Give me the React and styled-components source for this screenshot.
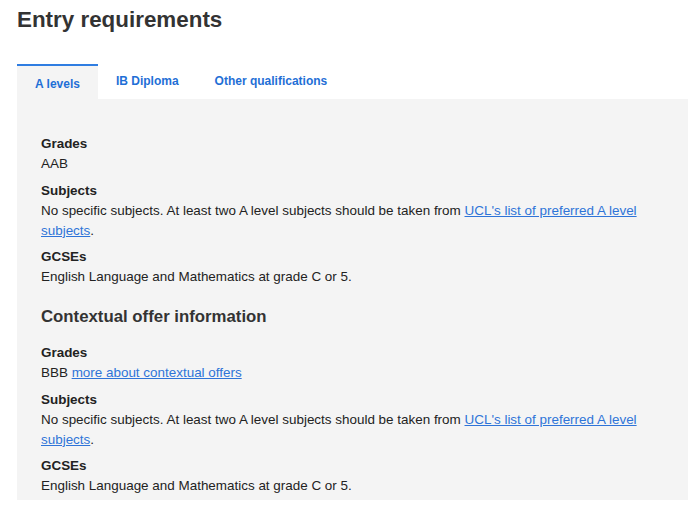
import React from 'react';
import styled, { createGlobalStyle } from 'styled-components';

const GlobalStyle = createGlobalStyle`
  body {
    margin: 0;
    background: #ffffff;
    font-family: 'Liberation Sans', Arial, sans-serif;
    color: #222222;
  }
`;

const Page = styled.div`
  padding: 4px 12px 0 17px;
`;

const Title = styled.h1`
  margin: 0;
  font-size: 22.4px;
  line-height: 32px;
  font-weight: bold;
  color: #333333;
`;

const TabList = styled.div`
  display: flex;
  margin-top: 28px;
`;

const Tab = styled.div`
  height: 35px;
  box-sizing: border-box;
  padding: ${(p) => (p.active ? '8px 18px 0' : '5px 18px 0')};
  border-top: 2px solid ${(p) => (p.active ? '#2f7de1' : 'transparent')};
  background: ${(p) => (p.active ? '#f4f4f4' : 'transparent')};
  color: #1f6fd6;
  font-size: 12px;
  font-weight: bold;
  line-height: 20px;
`;

const Panel = styled.div`
  background: #f4f4f4;
  padding: 35px 24px 0;
`;

const Block = styled.div`
  margin-bottom: 6.5px;
  font-size: 13.45px;
  line-height: 20px;

  &:last-child {
    margin-bottom: 0;
    padding-bottom: 4px;
  }
`;

const Label = styled.div`
  font-weight: bold;
  color: #222222;
`;

const Value = styled.div`
  color: #222222;
`;

const Link = styled.a`
  color: #2f74d8;
  text-decoration: underline;
`;

const SectionHeading = styled.h2`
  margin: 18px 0 14px;
  font-size: 16.8px;
  line-height: 24px;
  font-weight: bold;
  color: #333333;
`;

function Requirement({ label, children }) {
  return (
    <Block>
      <Label>{label}</Label>
      <Value>{children}</Value>
    </Block>
  );
}

const subjectsText = (
  <>
    No specific subjects. At least two A level subjects should be taken from{' '}
    <Link href="#">UCL's list of preferred A level subjects</Link>.
  </>
);

export default function App() {
  return (
    <Page>
      <GlobalStyle />
      <Title>Entry requirements</Title>
      <TabList>
        <Tab active>A levels</Tab>
        <Tab>IB Diploma</Tab>
        <Tab>Other qualifications</Tab>
      </TabList>
      <Panel>
        <Requirement label="Grades">AAB</Requirement>
        <Requirement label="Subjects">{subjectsText}</Requirement>
        <Requirement label="GCSEs">English Language and Mathematics at grade C or 5.</Requirement>
        <SectionHeading>Contextual offer information</SectionHeading>
        <Requirement label="Grades">
          BBB <Link href="#">more about contextual offers</Link>
        </Requirement>
        <Requirement label="Subjects">{subjectsText}</Requirement>
        <Requirement label="GCSEs">English Language and Mathematics at grade C or 5.</Requirement>
      </Panel>
    </Page>
  );
}
